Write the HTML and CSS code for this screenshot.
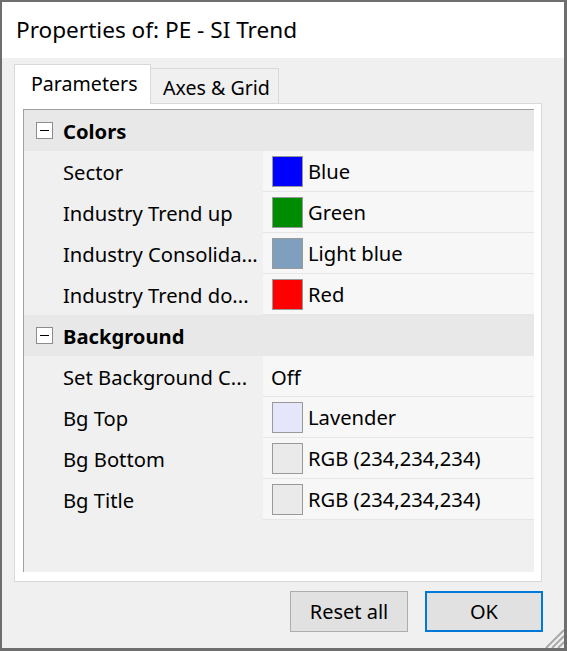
FILE: index.html
```html
<!DOCTYPE html>
<html>
<head>
<meta charset="utf-8">
<link rel="stylesheet" href="styles.css">
</head>
<body>
<div class="window">
  <div class="titlebar">Properties of: PE - SI Trend</div>
  <div class="content">
    <div class="tabs">
      <div class="tab active">Parameters</div>
      <div class="tab">Axes &amp; Grid</div>
    </div>
    <div class="panel">
      <div class="grid">
        <div class="cat"><span class="toggle"></span><span class="cat-label">Colors</span></div>
        <div class="row"><div class="name">Sector</div><div class="value"><span class="sw sw-blue"></span>Blue</div></div>
        <div class="row"><div class="name">Industry Trend up</div><div class="value"><span class="sw sw-green"></span>Green</div></div>
        <div class="row"><div class="name">Industry Consolida...</div><div class="value"><span class="sw sw-lblue"></span>Light blue</div></div>
        <div class="row"><div class="name">Industry Trend do...</div><div class="value"><span class="sw sw-red"></span>Red</div></div>
        <div class="cat"><span class="toggle"></span><span class="cat-label">Background</span></div>
        <div class="row"><div class="name">Set Background C...</div><div class="value text-only">Off</div></div>
        <div class="row"><div class="name">Bg Top</div><div class="value"><span class="sw sw-lav"></span>Lavender</div></div>
        <div class="row"><div class="name">Bg Bottom</div><div class="value"><span class="sw sw-gray"></span>RGB (234,234,234)</div></div>
        <div class="row"><div class="name">Bg Title</div><div class="value"><span class="sw sw-gray"></span>RGB (234,234,234)</div></div>
      </div>
    </div>
    <div class="buttons">
      <div class="btn">Reset all</div>
      <div class="btn default">OK</div>
    </div>
    <div class="grip">
      <svg width="22" height="22" viewBox="0 0 22 22">
        <g stroke="#a8a8a8" stroke-width="2">
          <line x1="22" y1="4" x2="4" y2="22"/>
          <line x1="22" y1="10" x2="10" y2="22"/>
          <line x1="22" y1="16" x2="16" y2="22"/>
        </g>
      </svg>
    </div>
  </div>
</div>
</body>
</html>
```

FILE: styles.css
```css
html, body {
  margin: 0;
  padding: 0;
}
body {
  width: 567px;
  height: 651px;
  overflow: hidden;
  font-family: "Noto Sans", "Open Sans", sans-serif;
  color: #000;
}
.window {
  box-sizing: border-box;
  width: 567px;
  height: 651px;
  border-style: solid;
  border-color: #6e6e6e;
  border-width: 2px 3px 3px 2px;
  display: flex;
  flex-direction: column;
  background: #f0f0f0;
}
.titlebar {
  height: 56px;
  background: #fff;
  padding-left: 14px;
  font-size: 22.6px;
  line-height: 56px;
  flex: none;
}
.content {
  flex: 1;
  position: relative;
  padding: 6px 0 0 12px;
}
.tabs {
  display: flex;
  align-items: flex-end;
  height: 39px;
  position: relative;
  z-index: 2;
}
.tab {
  box-sizing: border-box;
  width: 128px;
  height: 35px;
  border: 1px solid #d9d9d9;
  border-left: none;
  border-bottom: none;
  background: #f0f0f0;
  font-size: 19.6px;
  padding-left: 12px;
  line-height: 37px;
}
.tab.active {
  width: 137px;
  height: 40px;
  margin-bottom: -1px;
  border-left: 1px solid #d9d9d9;
  background: #fff;
  padding-left: 16px;
  line-height: 38px;
}
.panel {
  box-sizing: border-box;
  width: 528px;
  height: 479px;
  background: #fff;
  border: 1px solid #d9d9d9;
  padding: 5px 7px 9px 8px;
  position: relative;
  z-index: 1;
}
.grid {
  box-sizing: border-box;
  height: 100%;
  background: #f0f0f0;
  border-top: 1px solid #a0a0a0;
  border-left: 1px solid #a0a0a0;
  font-size: 20.2px;
}
.cat {
  height: 41px;
  background: #e8e8e8;
  display: flex;
  align-items: center;
}
.toggle {
  box-sizing: border-box;
  width: 17px;
  height: 17px;
  margin-left: 12px;
  margin-right: 10px;
  border: 1px solid #8c8c8c;
  background: #fff;
  position: relative;
}
.toggle::after {
  content: "";
  position: absolute;
  left: 3px;
  right: 3px;
  top: 7px;
  height: 1px;
  background: #000;
}
.cat-label {
  font-weight: bold;
}
.row {
  display: flex;
  height: 41px;
}
.name {
  width: 200px;
  padding-left: 39px;
  line-height: 42px;
  white-space: nowrap;
}
.value {
  box-sizing: border-box;
  flex: 1;
  background: #f7f7f7;
  border-bottom: 1px solid #e6e6e6;
  display: flex;
  align-items: center;
  padding-left: 9px;
}
.value.text-only {
  padding-left: 8px;
  padding-top: 2px;
}
.sw {
  box-sizing: border-box;
  width: 31px;
  height: 31px;
  border: 1px solid #999;
  margin-right: 5px;
  flex: none;
}
.sw-blue { background: #0000ff; }
.sw-green { background: #008c00; }
.sw-lblue { background: #7f9fbf; }
.sw-red { background: #ff0000; }
.sw-lav { background: #e6e6fa; }
.sw-gray { background: #eaeaea; }
.buttons {
  display: flex;
  justify-content: flex-end;
  gap: 17px;
  margin-top: 9px;
  padding-right: 21px;
  margin-left: -12px;
}
.btn {
  box-sizing: border-box;
  width: 118px;
  height: 41px;
  background: #e1e1e1;
  border: 1px solid #adadad;
  font-size: 20px;
  text-align: center;
  line-height: 39px;
}
.btn.default {
  border: 2px solid #0078d7;
  line-height: 37px;
}
.grip {
  position: absolute;
  right: 0;
  bottom: 0;
  width: 22px;
  height: 22px;
  line-height: 0;
}
```
